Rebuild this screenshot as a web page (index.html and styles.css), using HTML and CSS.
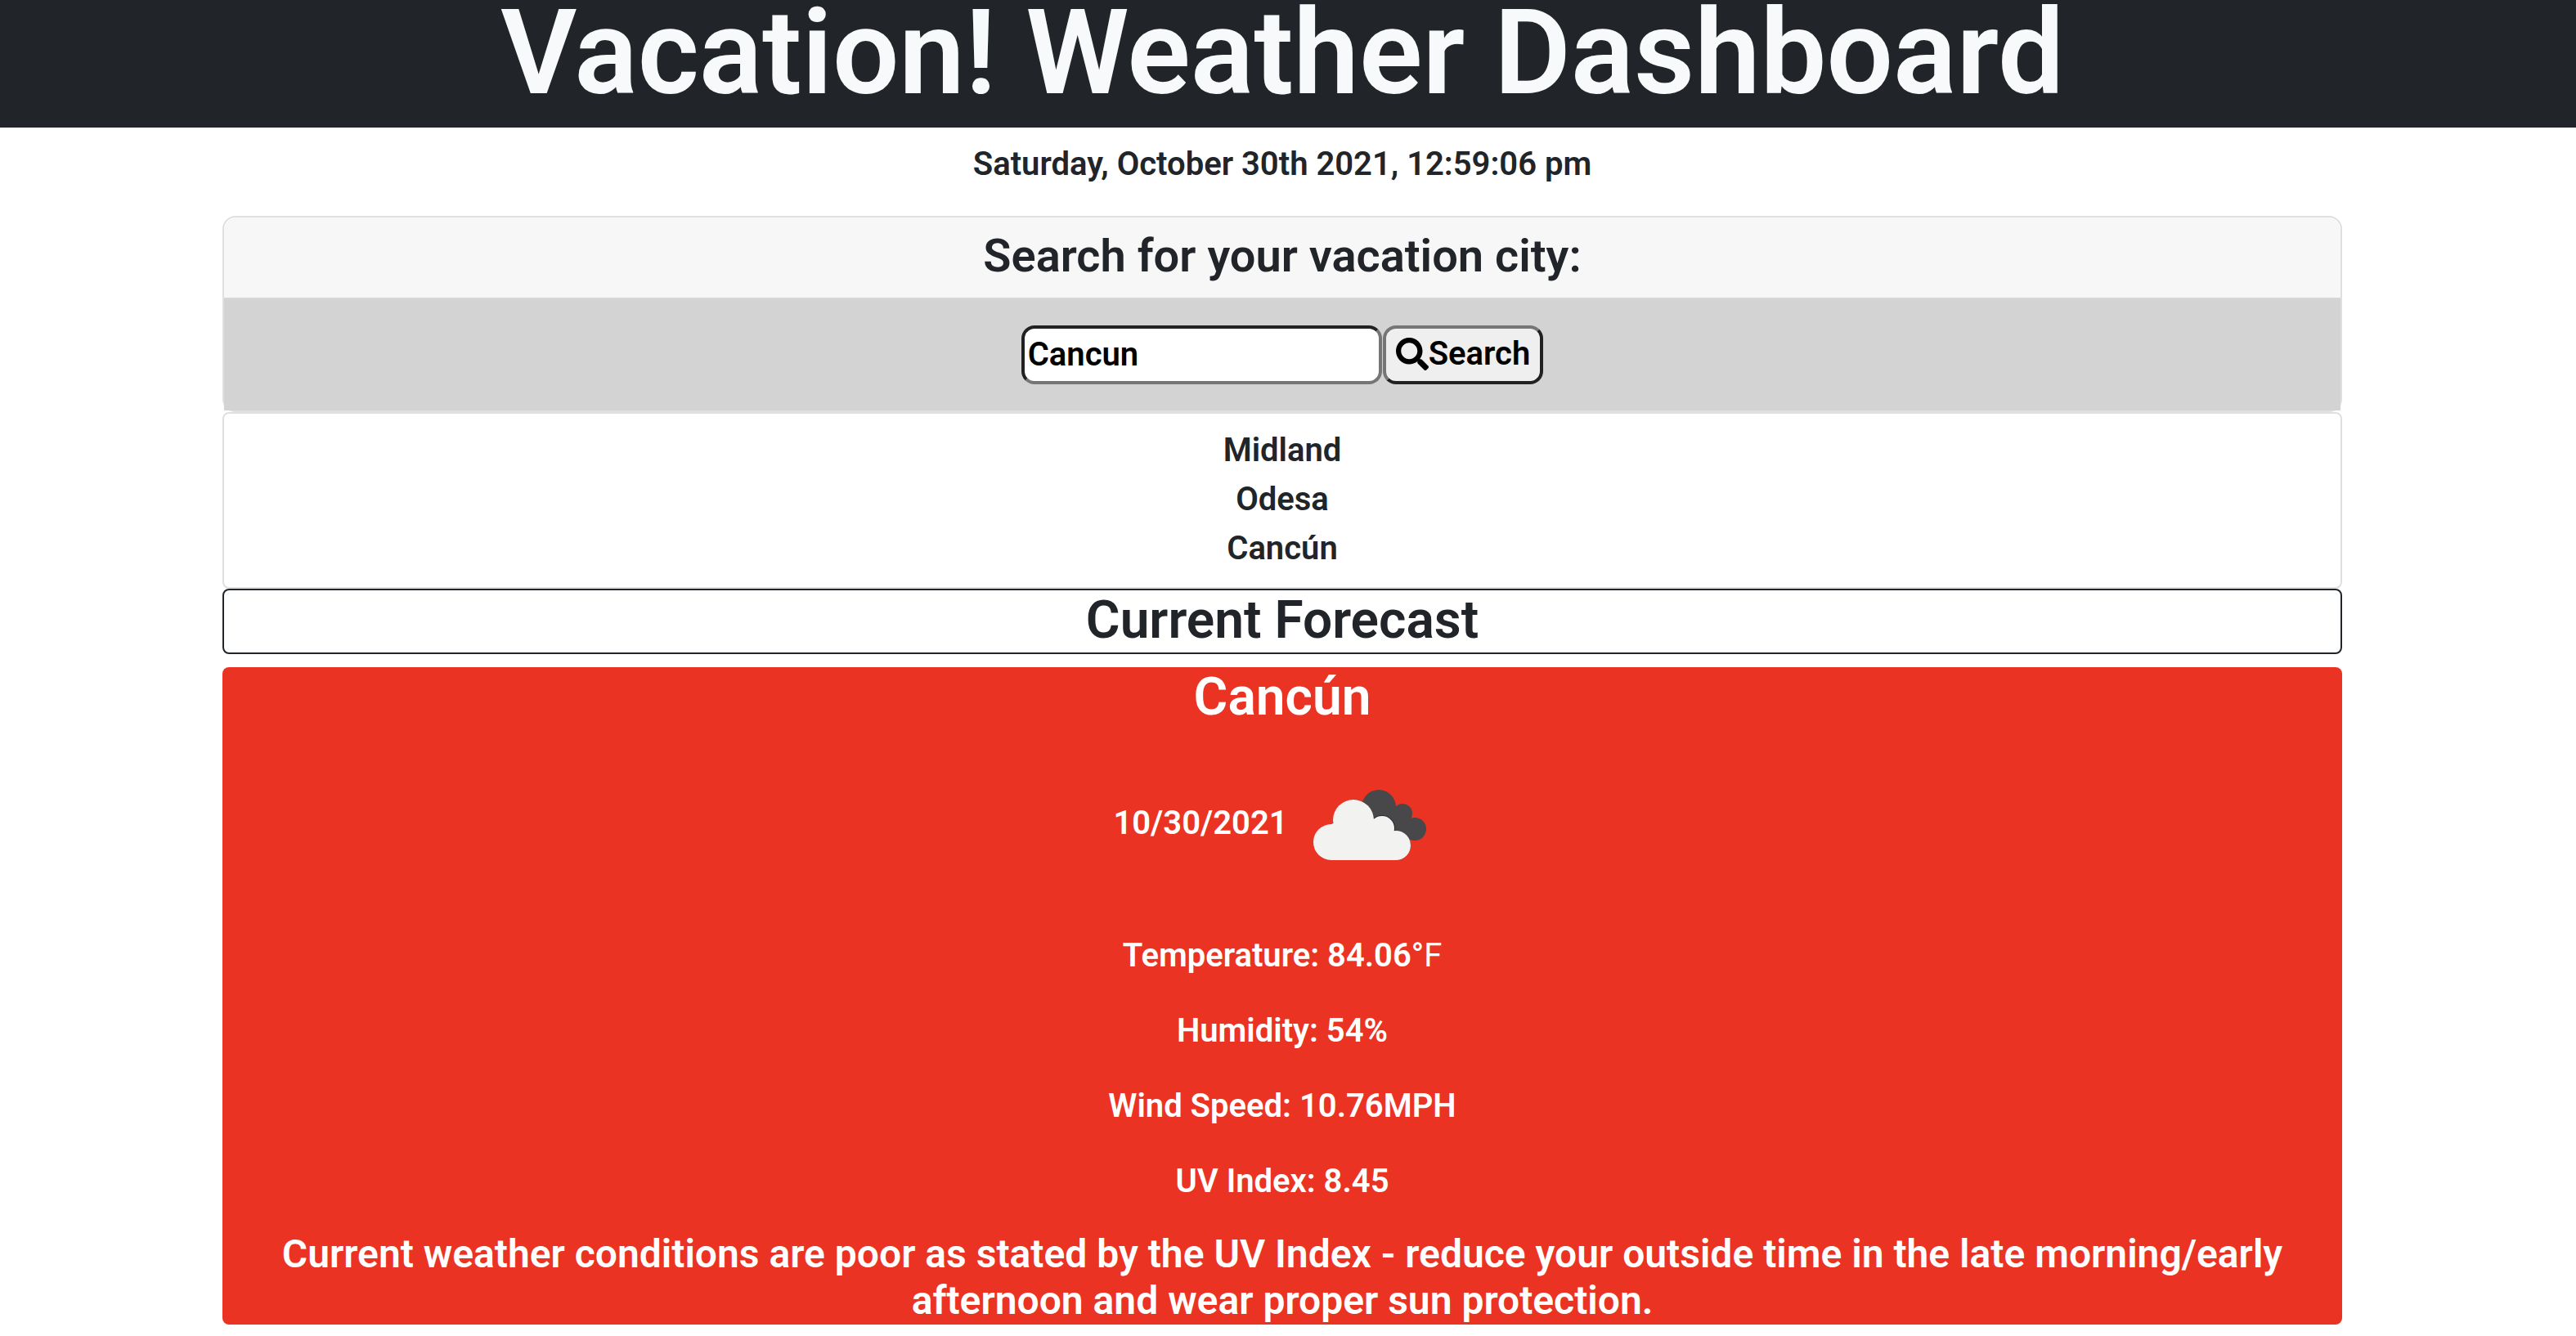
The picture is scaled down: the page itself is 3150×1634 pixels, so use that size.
FILE: index.html
```html
<!DOCTYPE html>
<html lang="en">
<head>
<meta charset="utf-8">
<title>Vacation! Weather Dashboard</title>
<link rel="stylesheet" href="styles.css">
</head>
<body>
<header class="banner"><h1 class="banner-title">Vacation! Weather Dashboard</h1></header>
<p class="clock">Saturday, October 30th 2021, 12:59:06 pm</p>
<main class="container">
  <section class="card">
    <h3 class="card-header"><label for="city">Search for your vacation city:</label></h3>
    <form class="card-body">
      <input class="city-input" id="city" type="text" value="Cancun">
      <button class="search-button" type="button"><svg class="search-icon" viewBox="0 0 512 512" aria-hidden="true"><path fill="currentColor" d="M505 442.700L405.300 343c-4.500-4.500-10.600-7-17-7H372c27.600-35.300 44-79.700 44-128C416 93.100 322.900 0 208 0S0 93.100 0 208s93.100 208 208 208c48.300 0 92.700-16.400 128-44v16.300c0 6.400 2.500 12.500 7 17l99.700 99.700c9.400 9.400 24.600 9.400 33.900 0l28.300-28.300c9.400-9.400 9.400-24.600.1-34zM208 336c-70.700 0-128-57.200-128-128 0-70.700 57.200-128 128-128 70.700 0 128 57.200 128 128 0 70.700-57.200 128-128 128z"/></svg>Search</button>
    </form>
  </section>
  <ul class="history">
    <li>Midland</li>
    <li>Odesa</li>
    <li>Cancún</li>
  </ul>
  <h2 class="forecast-title">Current Forecast</h2>
  <section class="forecast">
    <h2 class="forecast-city">Cancún</h2>
    <div class="forecast-day">
      <span>10/30/2021</span>
      <svg class="weather-icon" viewBox="3 0 200 200" role="img" aria-label="broken clouds">
        <g fill="#48484a"><circle cx="114" cy="79" r="21"/><circle cx="143" cy="87" r="12"/><circle cx="158" cy="106" r="14"/><path d="M100 79L135 79L155 95L158 120L130 112z"/></g>
        <g fill="#f2f2f0" stroke="#2b2b2d" stroke-width="2"><circle cx="83" cy="95" r="24"/><circle cx="118" cy="105" r="15"/><circle cx="135" cy="126" r="17"/></g>
        <path fill="#ea3323" d="M30 60H82V68L50 102H30z"/>
        <g fill="#f2f2f0"><circle cx="56" cy="122" r="22"/><circle cx="83" cy="95" r="25"/><circle cx="118" cy="105" r="15"/><circle cx="135" cy="126" r="18"/><path d="M56 100L83 90L118 95L135 144H56z"/></g>
      </svg>
    </div>
    <p class="reading">Temperature: 84.06°<span class="unit">F</span></p>
    <p class="reading">Humidity: 54%</p>
    <p class="reading">Wind Speed: 10.76MPH</p>
    <p class="reading">UV Index: 8.45</p>
    <h4 class="advice">Current weather conditions are poor as stated by the UV Index - reduce your outside time in the late morning/early afternoon and wear proper sun protection.</h4>
  </section>
</main>
</body>
</html>
```
FILE: styles.css
```css
* { box-sizing: border-box; }

body {
  margin: 0;
  padding-right: 14px;
  background: #fff;
  color: #212529;
  font: 600 40px/60px Roboto, sans-serif;
  text-align: center;
}

h1, h2, h3, h4, p, ul {
  margin: 0;
  padding: 0;
  font-weight: 600;
}

.banner {
  margin-right: -14px;
  padding: 0 14px 26px 0;
  background: #212529;
  color: #f8f9fa;
}

.banner-title { font-size: 144px; line-height: 130px; }

.clock { padding: 15px 0 33px; }

.container {
  max-width: 2640px;
  margin: 0 auto;
  padding: 0 24px;
}

.card {
  border: 2px solid #dfdfdf;
  border-radius: 16px;
}

.card-header {
  padding: 14px 32px 18px;
  border-bottom: 2px solid #d7d7d7;
  border-radius: 14px 14px 0 0;
  background: #f7f7f7;
  font-size: 56px;
  line-height: 66px;
}

.card-body {
  display: flex;
  justify-content: center;
  gap: 1px;
  padding: 32px;
  background: #d3d3d3;
}

.city-input,
.search-button {
  height: 72px;
  border-radius: 16px;
  color: #000;
  font: inherit;
}

.city-input {
  width: 441px;
  padding: 0 4px 2px;
  border: 4px solid;
  border-color: #212121 #767676 #767676 #212121;
  background: #fff;
}

.search-button {
  display: flex;
  align-items: center;
  padding: 0 12px 2px;
  border: 4px solid;
  border-color: #767676 #212121 #212121 #767676;
  background: #efefef;
}

.search-icon { width: 40px; height: 40px; }

.history {
  padding: 15px 32px 17px;
  border: 2px solid #dfdfdf;
  border-radius: 8px;
  list-style: none;
}

.forecast-title {
  margin-bottom: 16px;
  padding-bottom: 2px;
  border: 2px solid #212529;
  border-radius: 8px;
  font-size: 64px;
  line-height: 74px;
}

.forecast {
  border-radius: 8px;
  background: #ea3323;
  color: #fff;
}

.forecast-city {
  margin-bottom: 18px;
  font-size: 64px;
  line-height: 74px;
}

.forecast-day {
  display: flex;
  justify-content: center;
  align-items: center;
  margin-bottom: 31px;
}

.forecast-day span { padding-bottom: 2px; }

.weather-icon { width: 200px; height: 200px; }

.reading { margin-bottom: 32px; }

.reading:last-of-type { margin-bottom: 30px; }

.unit { font-weight: 400; }

.advice {
  padding: 0 48px 1px;
  font-size: 48px;
  line-height: 57px;
}
```
